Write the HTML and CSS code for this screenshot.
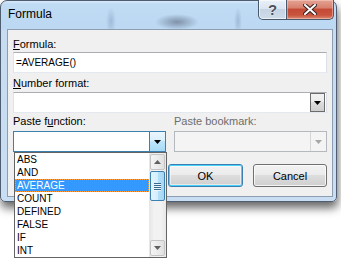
FILE: index.html
```html
<!DOCTYPE html>
<html lang="en">
<head>
  <meta charset="UTF-8" />
  <title>Formula</title>
  <link rel="stylesheet" href="styles.css">
</head>
<body>
  <div class="window">
    <!-- Title bar -->
    <div class="titlebar">
      <span class="title">Formula</span>
      <div class="caption-btns">
        <div class="cap-btn help-btn">?</div>
        <div class="cap-btn close-btn">
          <svg width="14" height="11" viewBox="0 0 14 11">
            <path d="M2 1 L12 10 M12 1 L2 10" stroke="#3a2220" stroke-width="4" stroke-linecap="square" />
            <path d="M2 1 L12 10 M12 1 L2 10" stroke="#fff" stroke-width="2" stroke-linecap="square" />
          </svg>
        </div>
      </div>
    </div>

    <!-- Dialog body -->
    <div class="client">
      <label class="label label-first"><u>F</u>ormula:</label>
      <div class="textbox">=AVERAGE()</div>

      <label class="label label-number"><u>N</u>umber format:</label>
      <div class="combo">
        <span class="combo-field"></span>
        <span class="combo-btn">
          <svg width="7" height="4" viewBox="0 0 7 4"><polygon points="0,0 7,0 3.5,4" fill="#000" /></svg>
        </span>
      </div>

      <div class="paste-row">
        <div class="paste-col">
          <label class="label label-paste">Paste f<u>u</u>nction:</label>
          <div class="combo combo-hot">
            <span class="combo-field"></span>
            <span class="combo-btn">
              <svg width="7" height="4" viewBox="0 0 7 4"><polygon points="0,0 7,0 3.5,4" fill="#000" /></svg>
            </span>
          </div>

          <!-- open drop-down list -->
          <div class="droplist">
            <ul class="items">
              <li>ABS</li>
              <li>AND</li>
              <li class="selected">AVERAGE</li>
              <li>COUNT</li>
              <li>DEFINED</li>
              <li>FALSE</li>
              <li>IF</li>
              <li>INT</li>
            </ul>
            <div class="vscroll">
              <div class="sb-arrow">
                <svg width="7" height="4" viewBox="0 0 7 4"><polygon points="0,4 7,4 3.5,0" fill="#606060" /></svg>
              </div>
              <div class="sb-thumb">
                <span></span><span></span><span></span><span></span>
              </div>
              <div class="sb-track"></div>
              <div class="sb-arrow">
                <svg width="7" height="4" viewBox="0 0 7 4"><polygon points="0,0 7,0 3.5,4" fill="#606060" /></svg>
              </div>
            </div>
          </div>
        </div>

        <div class="paste-col">
          <label class="label label-paste disabled">Paste bookmark:</label>
          <div class="combo combo-disabled">
            <span class="combo-field"></span>
            <span class="combo-btn">
              <svg width="7" height="4" viewBox="0 0 7 4"><polygon points="0,0 7,0 3.5,4" fill="#a6a6a6" /></svg>
            </span>
          </div>
        </div>
      </div>

      <div class="btn-row">
        <button class="btn btn-default">OK</button>
        <button class="btn btn-cancel">Cancel</button>
      </div>
    </div>
  </div>
</body>
</html>
```

FILE: styles.css
```css
html, body {
  height: 100%;
}
body {
  margin: 0;
  min-height: 265px;
  background: #fff;
  font-family: 'Liberation Sans', Arial, sans-serif;
  font-size: 11px;
  color: #000;
}
.window {
  width: 337px;
  box-sizing: border-box;
  border: 1px solid #4f5d70;
  border-radius: 7px 7px 5px 5px;
  padding: 0 3px 4px 6px;
  background:
    radial-gradient(ellipse 22px 8px at 176px 21px, rgba(100,115,138,0.7), rgba(100,115,138,0) 100%),
    radial-gradient(ellipse 5px 14px at 110px 20px, rgba(120,150,185,0.45), rgba(120,150,185,0) 100%),
    radial-gradient(ellipse 4px 14px at 237px 20px, rgba(120,150,185,0.45), rgba(120,150,185,0) 100%),
    linear-gradient(180deg, #d9e9f8 0px, #c0dbf4 3px, #bcd8f2 27px, #c6dcf1 30px, #c9def3 100%);
  box-shadow: 1px 6px 10px rgba(0,0,0,0.6);
}
.titlebar {
  height: 28px;
  display: flex;
  align-items: flex-start;
}
.title {
  flex: 1;
  font-size: 12px;
  line-height: 15px;
  padding: 6px 0 0 1px;
}
.caption-btns {
  display: flex;
  margin-top: -1px;
  margin-right: -1px;
}
.cap-btn {
  height: 20px;
  box-sizing: border-box;
  border: 1px solid #4a586c;
  border-top: none;
  display: flex;
  align-items: center;
  justify-content: center;
}
.help-btn {
  width: 29px;
  border-radius: 0 0 0 5px;
  background: linear-gradient(180deg, #e9f0f8 0%, #dbe5f1 45%, #c5d3e4 50%, #cfdcea 100%);
  box-shadow: inset 0 0 0 1px rgba(255,255,255,0.6);
  color: #4a4f58;
  font-size: 15px;
  font-weight: bold;
  line-height: 18px;
  text-shadow: 0 0 1px #fff, 0 0 1px #fff;
}
.close-btn {
  width: 47px;
  border-left: none;
  border-radius: 0 0 5px 0;
  background: linear-gradient(180deg, #e4a395 0%, #d8826f 40%, #c44a36 50%, #c9553f 80%, #db8a73 100%);
  box-shadow: inset 0 0 0 1px rgba(255,220,210,0.45);
}
.client {
  border: 1px solid #8d9db2;
  background: #f0f0f0;
  padding: 0 5px 9px;
}
.label {
  display: block;
  line-height: 13px;
}
.label-first {
  margin-top: 8px;
  margin-bottom: 1px;
}
.label-number {
  margin-top: 4px;
  margin-bottom: 2px;
}
.label-paste {
  margin-top: 2px;
  margin-bottom: 3px;
}
.disabled {
  color: #6d6d6d;
}
.textbox {
  height: 21px;
  box-sizing: border-box;
  border: 1px solid;
  border-color: #abadb3 #dbdfe6 #e3e9ef #e2e3ea;
  background: #fff;
  padding-left: 2px;
  font-size: 10px;
  line-height: 19px;
}
.combo {
  height: 21px;
  box-sizing: border-box;
  border: 1px solid;
  border-color: #abadb3 #dbdfe6 #e3e9ef #e2e3ea;
  background: #fff;
  display: flex;
}
.combo-field {
  flex: 1;
}
.combo-btn {
  width: 15px;
  margin-right: 1px;
  box-sizing: border-box;
  border: 1px solid #6c6c6c;
  background: linear-gradient(180deg, #f2f2f2 0%, #ebebeb 50%, #dddddd 50%, #cfcfcf 100%);
  display: flex;
  align-items: center;
  justify-content: center;
}
.paste-row {
  display: grid;
  grid-template-columns: 153px 1fr;
  column-gap: 8px;
}
.paste-col {
  position: relative;
}
.combo-hot {
  border-color: #3c7fb1;
}
.combo-hot .combo-btn {
  width: 17px;
  margin: -1px -1px -1px 0;
  height: 21px;
  border-color: #3c7fb1;
  background: linear-gradient(180deg, #eaf6fd 0%, #d9f0fc 45%, #bee6fd 50%, #a7d9f5 100%);
}
.combo-disabled {
  border-color: #b5b8bc;
  background: #f4f4f4;
}
.combo-disabled .combo-btn {
  width: 16px;
  margin: 0;
  border: none;
  border-left: 1px solid #d6d6d6;
  background: #f4f4f4;
}

/* open drop-down list */
.droplist {
  position: absolute;
  top: 100%;
  left: 1px;
  width: 153px;
  height: 106px;
  box-sizing: border-box;
  border: 1px solid #646464;
  background: #fff;
  display: flex;
  z-index: 5;
}
.items {
  flex: 1;
  margin: 0;
  padding: 0;
  list-style: none;
  font-size: 10px;
}
.items li {
  height: 13px;
  line-height: 13px;
  padding-left: 2px;
}
.items li.selected {
  background: #3399ff;
  color: #fff;
  outline: 1px dotted #ff9d3c;
  outline-offset: -1px;
}
.vscroll {
  width: 17px;
  display: flex;
  flex-direction: column;
  background: linear-gradient(90deg, #e5e5e5 0%, #f2f2f2 30%, #f2f2f2 70%, #e8e8e8 100%);
}
.sb-arrow {
  height: 16px;
  margin: 1px 1px 0;
  box-sizing: border-box;
  border: 1px solid #c4c4c4;
  border-radius: 2px;
  background: linear-gradient(90deg, #f4f4f4 0%, #ececec 50%, #e0e0e0 100%);
  display: flex;
  align-items: center;
  justify-content: center;
}
.sb-arrow:last-child {
  margin: 0 1px 1px;
}
.sb-thumb {
  height: 30px;
  margin: 1px 1px 0;
  box-sizing: border-box;
  border: 1px solid #3c7fb1;
  border-radius: 2px;
  background: linear-gradient(90deg, #e3f4fc 0%, #d5effc 50%, #b3e0f9 52%, #a8d6f3 100%);
  display: flex;
  flex-direction: column;
  align-items: center;
  justify-content: center;
  gap: 1px;
}
.sb-thumb span {
  width: 7px;
  height: 1px;
  background: #3a6a8c;
  box-shadow: 0 1px 0 #e9f6fd;
}
.sb-track {
  flex: 1;
}

/* dialog buttons */
.btn-row {
  display: flex;
  justify-content: flex-end;
  gap: 10px;
  margin-top: 12px;
}
.btn {
  height: 23px;
  box-sizing: border-box;
  border: 1px solid #707070;
  border-radius: 3px;
  font-family: 'Liberation Sans', Arial, sans-serif;
  font-size: 11px;
  color: #000;
  padding: 0;
  background: linear-gradient(180deg, #f2f2f2 0%, #ebebeb 50%, #dddddd 50%, #cfcfcf 100%);
  box-shadow: inset 0 0 0 1px rgba(255,255,255,0.75);
}
.btn-default {
  width: 75px;
  border-color: #3c7fb1;
  box-shadow: inset 0 0 0 1px #48d2fb, inset 0 0 0 2px rgba(255,255,255,0.5);
}
.btn-cancel {
  width: 74px;
}
```
